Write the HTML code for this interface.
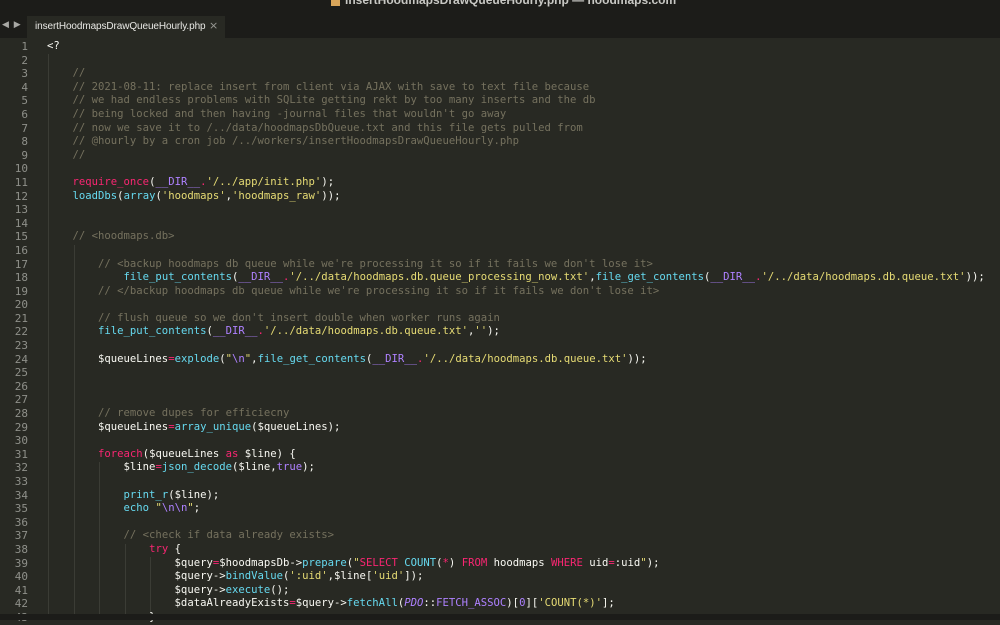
<!DOCTYPE html>
<html><head><meta charset="utf-8"><style>
html,body{margin:0;padding:0;width:1000px;height:620px;overflow:hidden;background:#282923;}
#title{position:absolute;left:0;top:0;width:1000px;height:14px;background:#1c1c19;}
#title span{position:absolute;left:345px;top:-7px;font:bold 12px "Liberation Sans",sans-serif;color:#c8c8c4;white-space:nowrap;}
#title i{position:absolute;left:331px;top:-3px;width:9px;height:9px;background:#d8a55a;}
#tabs{position:absolute;left:0;top:14px;width:1000px;height:24px;background:#1c1c19;}
#tab{position:absolute;left:27px;top:2px;width:198px;height:22px;background:#282923;}
#tab span{position:absolute;left:8px;top:5px;font:10px "Liberation Sans",sans-serif;letter-spacing:-0.1px;color:#e8e8e4;white-space:nowrap;}
#x{position:absolute;left:209px;top:19px;font:11px "DejaVu Sans",sans-serif;color:#9a9a95;z-index:5;}
#arr{position:absolute;left:2px;top:6px;font:9px "DejaVu Sans",sans-serif;color:#a8a8a4;letter-spacing:1px;}
#code{position:absolute;left:0;top:40px;width:1000px;}
.l{position:relative;height:13.6px;line-height:13.6px;font:10.6px/13.6px "DejaVu Sans Mono",monospace;white-space:pre;color:#f8f8f2;}
.n{position:absolute;left:0;width:28px;text-align:right;color:#8f908a;font-size:11px;}
.t{position:absolute;left:47px;}
.c{color:#75715e}.k{color:#f92672}.f{color:#66d9ef}.s{color:#e6db74}.p{color:#ae81ff}.i{color:#ae81ff;font-style:italic}
.g{position:absolute;top:54px;width:1px;background:#3b3c35;}
</style></head><body>
<div id="title"><i></i><span>insertHoodmapsDrawQueueHourly.php — hoodmaps.com</span></div>
<div id="tabs"><div id="arr">◀ ▶</div><div id="tab"><span>insertHoodmapsDrawQueueHourly.php</span></div></div>
<div id="x">×</div>
<div class="g" style="left:48px;height:566px"></div>
<div class="g" style="left:74px;top:245px;height:375px"></div>
<div class="g" style="left:99px;top:462px;height:158px"></div>
<div class="g" style="left:125px;top:544px;height:76px"></div>
<div class="g" style="left:150px;top:557px;height:63px"></div>
<div id="code">
<div class="l"><span class="n">1</span><span class="t">&lt;?</span></div>
<div class="l"><span class="n">2</span><span class="t"></span></div>
<div class="l"><span class="n">3</span><span class="t">    <span class="c">//</span></span></div>
<div class="l"><span class="n">4</span><span class="t">    <span class="c">// 2021-08-11: replace insert from client via AJAX with save to text file because</span></span></div>
<div class="l"><span class="n">5</span><span class="t">    <span class="c">// we had endless problems with SQLite getting rekt by too many inserts and the db</span></span></div>
<div class="l"><span class="n">6</span><span class="t">    <span class="c">// being locked and then having -journal files that wouldn't go away</span></span></div>
<div class="l"><span class="n">7</span><span class="t">    <span class="c">// now we save it to /../data/hoodmapsDbQueue.txt and this file gets pulled from</span></span></div>
<div class="l"><span class="n">8</span><span class="t">    <span class="c">// @hourly by a cron job /../workers/insertHoodmapsDrawQueueHourly.php</span></span></div>
<div class="l"><span class="n">9</span><span class="t">    <span class="c">//</span></span></div>
<div class="l"><span class="n">10</span><span class="t"></span></div>
<div class="l"><span class="n">11</span><span class="t">    <span class="k">require_once</span>(<span class="p">__DIR__</span><span class="k">.</span><span class="s">'/../app/init.php'</span>);</span></div>
<div class="l"><span class="n">12</span><span class="t">    <span class="f">loadDbs</span>(<span class="f">array</span>(<span class="s">'hoodmaps'</span>,<span class="s">'hoodmaps_raw'</span>));</span></div>
<div class="l"><span class="n">13</span><span class="t"></span></div>
<div class="l"><span class="n">14</span><span class="t"></span></div>
<div class="l"><span class="n">15</span><span class="t">    <span class="c">// &lt;hoodmaps.db&gt;</span></span></div>
<div class="l"><span class="n">16</span><span class="t"></span></div>
<div class="l"><span class="n">17</span><span class="t">        <span class="c">// &lt;backup hoodmaps db queue while we're processing it so if it fails we don't lose it&gt;</span></span></div>
<div class="l"><span class="n">18</span><span class="t">            <span class="f">file_put_contents</span>(<span class="p">__DIR__</span><span class="k">.</span><span class="s">'/../data/hoodmaps.db.queue_processing_now.txt'</span>,<span class="f">file_get_contents</span>(<span class="p">__DIR__</span><span class="k">.</span><span class="s">'/../data/hoodmaps.db.queue.txt'</span>));</span></div>
<div class="l"><span class="n">19</span><span class="t">        <span class="c">// &lt;/backup hoodmaps db queue while we're processing it so if it fails we don't lose it&gt;</span></span></div>
<div class="l"><span class="n">20</span><span class="t"></span></div>
<div class="l"><span class="n">21</span><span class="t">        <span class="c">// flush queue so we don't insert double when worker runs again</span></span></div>
<div class="l"><span class="n">22</span><span class="t">        <span class="f">file_put_contents</span>(<span class="p">__DIR__</span><span class="k">.</span><span class="s">'/../data/hoodmaps.db.queue.txt'</span>,<span class="s">''</span>);</span></div>
<div class="l"><span class="n">23</span><span class="t"></span></div>
<div class="l"><span class="n">24</span><span class="t">        $queueLines<span class="k">=</span><span class="f">explode</span>(<span class="s">"</span><span class="p">\n</span><span class="s">"</span>,<span class="f">file_get_contents</span>(<span class="p">__DIR__</span><span class="k">.</span><span class="s">'/../data/hoodmaps.db.queue.txt'</span>));</span></div>
<div class="l"><span class="n">25</span><span class="t"></span></div>
<div class="l"><span class="n">26</span><span class="t"></span></div>
<div class="l"><span class="n">27</span><span class="t"></span></div>
<div class="l"><span class="n">28</span><span class="t">        <span class="c">// remove dupes for efficiecny</span></span></div>
<div class="l"><span class="n">29</span><span class="t">        $queueLines<span class="k">=</span><span class="f">array_unique</span>($queueLines);</span></div>
<div class="l"><span class="n">30</span><span class="t"></span></div>
<div class="l"><span class="n">31</span><span class="t">        <span class="k">foreach</span>($queueLines <span class="k">as</span> $line) {</span></div>
<div class="l"><span class="n">32</span><span class="t">            $line<span class="k">=</span><span class="f">json_decode</span>($line,<span class="p">true</span>);</span></div>
<div class="l"><span class="n">33</span><span class="t"></span></div>
<div class="l"><span class="n">34</span><span class="t">            <span class="f">print_r</span>($line);</span></div>
<div class="l"><span class="n">35</span><span class="t">            <span class="f">echo</span> <span class="s">"</span><span class="p">\n\n</span><span class="s">"</span>;</span></div>
<div class="l"><span class="n">36</span><span class="t"></span></div>
<div class="l"><span class="n">37</span><span class="t">            <span class="c">// &lt;check if data already exists&gt;</span></span></div>
<div class="l"><span class="n">38</span><span class="t">                <span class="k">try</span> {</span></div>
<div class="l"><span class="n">39</span><span class="t">                    $query<span class="k">=</span>$hoodmapsDb-&gt;<span class="f">prepare</span>(<span class="s">"</span><span class="k">SELECT</span> <span class="f">COUNT</span>(<span class="k">*</span>) <span class="k">FROM</span> hoodmaps <span class="k">WHERE</span> uid<span class="k">=</span>:uid<span class="s">"</span>);</span></div>
<div class="l"><span class="n">40</span><span class="t">                    $query-&gt;<span class="f">bindValue</span>(<span class="s">':uid'</span>,$line[<span class="s">'uid'</span>]);</span></div>
<div class="l"><span class="n">41</span><span class="t">                    $query-&gt;<span class="f">execute</span>();</span></div>
<div class="l"><span class="n">42</span><span class="t">                    $dataAlreadyExists<span class="k">=</span>$query-&gt;<span class="f">fetchAll</span>(<span class="i">PDO</span>::<span class="p">FETCH_ASSOC</span>)[<span class="p">0</span>][<span class="s">'COUNT(*)'</span>];</span></div>
<div class="l"><span class="n">43</span><span class="t">                }</span></div>
</div>
<div style="position:absolute;left:0;top:614px;width:1000px;height:6px;background:#1c1c19"></div>
</body></html>
